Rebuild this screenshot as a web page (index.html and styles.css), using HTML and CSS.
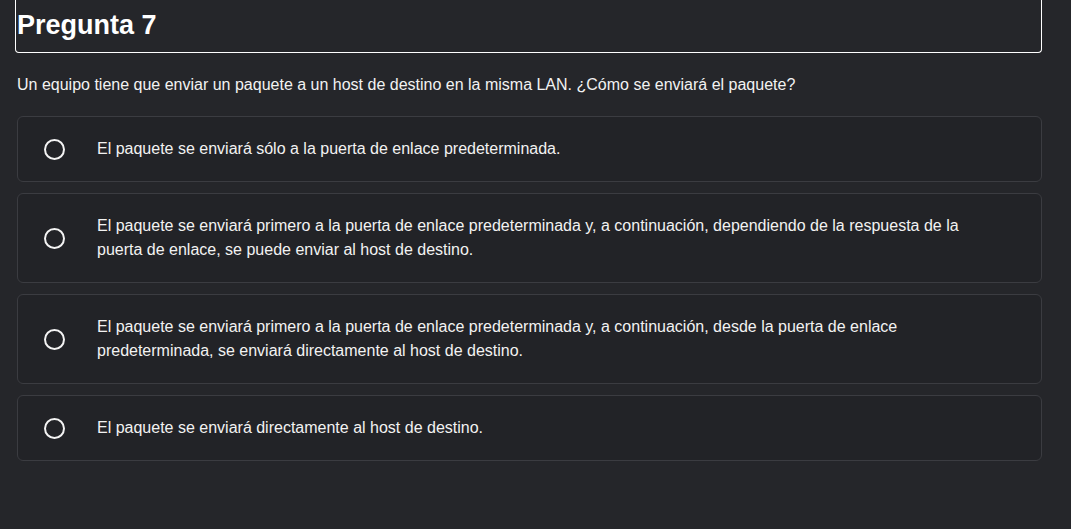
FILE: index.html
```html
<!DOCTYPE html>
<html lang="es">
<head>
<meta charset="utf-8">
<link rel="stylesheet" href="styles.css">
</head>
<body>
<div class="page">
  <div class="header"><h1 class="title">Pregunta 7</h1></div>
  <p class="question">Un equipo tiene que enviar un paquete a un host de destino en la misma LAN. ¿Cómo se enviará el paquete?</p>
  <div class="options">
    <div class="option"><span class="radio"></span><span class="label">El paquete se enviará sólo a la puerta de enlace predeterminada.</span></div>
    <div class="option"><span class="radio"></span><span class="label">El paquete se enviará primero a la puerta de enlace predeterminada y, a continuación, dependiendo de la respuesta de la puerta de enlace, se puede enviar al host de destino.</span></div>
    <div class="option"><span class="radio"></span><span class="label">El paquete se enviará primero a la puerta de enlace predeterminada y, a continuación, desde la puerta de enlace predeterminada, se enviará directamente al host de destino.</span></div>
    <div class="option"><span class="radio"></span><span class="label">El paquete se enviará directamente al host de destino.</span></div>
  </div>
</div>
</body>
</html>
```
FILE: styles.css
```css
html, body { margin: 0; padding: 0; background: #25262a; }
body { font-family: "Liberation Sans", Arial, sans-serif; color: #f2f2f2; }
.page { padding: 0 29px 0 15px; }
.header {
  border: 1px solid #ffffff;
  border-top: none;
  border-radius: 0 0 4px 4px;
  height: 53px;
  box-sizing: border-box;
  padding: 9px 0 0 1px;
  background: #25262a;
}
.title { margin: 0; font-size: 27px; font-weight: bold; line-height: 32px; color: #fff; }
.question { margin: 22px 0 0 2px; font-size: 16px; line-height: 20px; }
.options { display: flex; flex-direction: column; gap: 11px; margin: 21px 0 0 2px; }
.option {
  display: flex; align-items: center;
  border: 1px solid #3b3c41; border-radius: 6px;
  background: #222327;
  box-sizing: border-box;
  padding: 20px 55px 20px 26px;
}
.radio {
  flex: none; width: 21px; height: 21px; box-sizing: border-box;
  border: 2px solid #f4f4f4; border-radius: 50%;
  margin-right: 32px;
}
.label { font-size: 16px; line-height: 24px; }
```
